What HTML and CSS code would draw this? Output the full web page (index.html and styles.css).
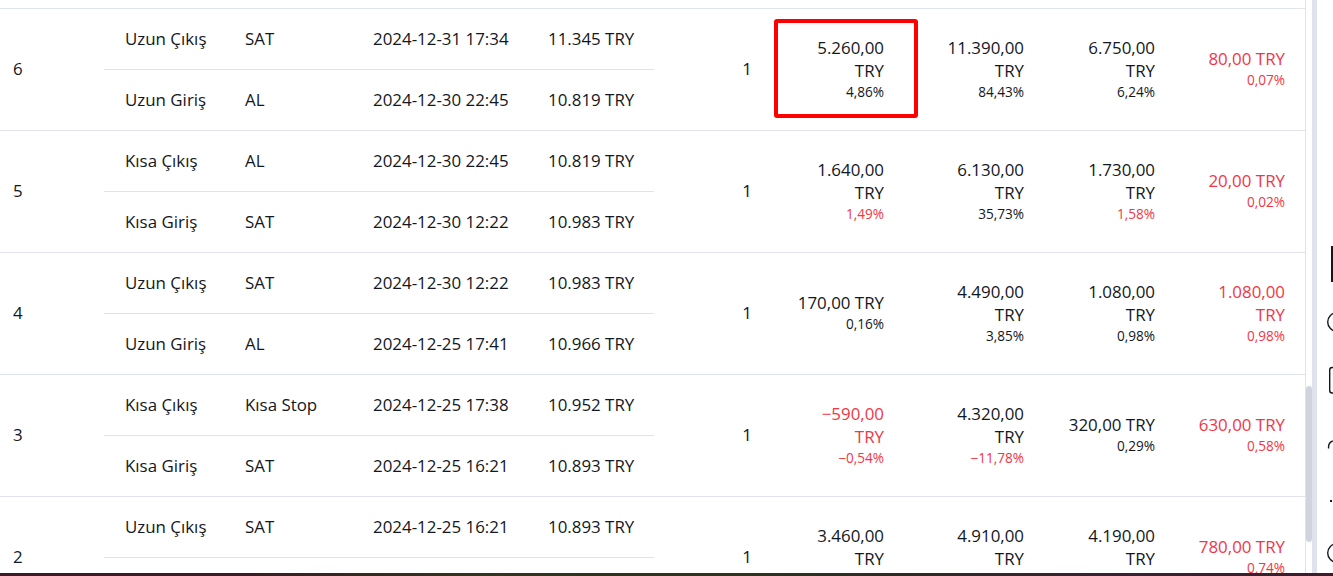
FILE: index.html
```html
<!DOCTYPE html>
<html lang="tr">
<head>
<meta charset="utf-8">
<title>İşlem Listesi</title>
<link rel="stylesheet" href="styles.css">
</head>
<body>
<div class="screen">
  <div class="workspace">
    <div class="trades">
      <div class="row-tail"></div>

      <div class="trade">
        <div class="num">6</div>
        <div class="legs">
          <div class="leg"><span>Uzun Çıkış</span><span>SAT</span><span>2024-12-31 17:34</span><span>11.345 TRY</span></div>
          <div class="leg"><span>Uzun Giriş</span><span>AL</span><span>2024-12-30 22:45</span><span>10.819 TRY</span></div>
        </div>
        <div class="val"><div class="main">1</div></div>
        <div class="val marked">
          <div class="main">5.260,00</div><div class="main">TRY</div><div class="sub">4,86%</div>
          <div class="mark"></div>
        </div>
        <div class="val"><div class="main">11.390,00</div><div class="main">TRY</div><div class="sub">84,43%</div></div>
        <div class="val"><div class="main">6.750,00</div><div class="main">TRY</div><div class="sub">6,24%</div></div>
        <div class="val neg"><div class="main">80,00 TRY</div><div class="sub">0,07%</div></div>
      </div>

      <div class="trade">
        <div class="num">5</div>
        <div class="legs">
          <div class="leg"><span>Kısa Çıkış</span><span>AL</span><span>2024-12-30 22:45</span><span>10.819 TRY</span></div>
          <div class="leg"><span>Kısa Giriş</span><span>SAT</span><span>2024-12-30 12:22</span><span>10.983 TRY</span></div>
        </div>
        <div class="val"><div class="main">1</div></div>
        <div class="val"><div class="main">1.640,00</div><div class="main">TRY</div><div class="sub red">1,49%</div></div>
        <div class="val"><div class="main">6.130,00</div><div class="main">TRY</div><div class="sub">35,73%</div></div>
        <div class="val"><div class="main">1.730,00</div><div class="main">TRY</div><div class="sub red">1,58%</div></div>
        <div class="val neg"><div class="main">20,00 TRY</div><div class="sub">0,02%</div></div>
      </div>

      <div class="trade">
        <div class="num">4</div>
        <div class="legs">
          <div class="leg"><span>Uzun Çıkış</span><span>SAT</span><span>2024-12-30 12:22</span><span>10.983 TRY</span></div>
          <div class="leg"><span>Uzun Giriş</span><span>AL</span><span>2024-12-25 17:41</span><span>10.966 TRY</span></div>
        </div>
        <div class="val"><div class="main">1</div></div>
        <div class="val"><div class="main">170,00 TRY</div><div class="sub">0,16%</div></div>
        <div class="val"><div class="main">4.490,00</div><div class="main">TRY</div><div class="sub">3,85%</div></div>
        <div class="val"><div class="main">1.080,00</div><div class="main">TRY</div><div class="sub">0,98%</div></div>
        <div class="val neg"><div class="main">1.080,00</div><div class="main">TRY</div><div class="sub">0,98%</div></div>
      </div>

      <div class="trade">
        <div class="num">3</div>
        <div class="legs">
          <div class="leg"><span>Kısa Çıkış</span><span>Kısa Stop</span><span>2024-12-25 17:38</span><span>10.952 TRY</span></div>
          <div class="leg"><span>Kısa Giriş</span><span>SAT</span><span>2024-12-25 16:21</span><span>10.893 TRY</span></div>
        </div>
        <div class="val"><div class="main">1</div></div>
        <div class="val neg"><div class="main">−590,00</div><div class="main">TRY</div><div class="sub">−0,54%</div></div>
        <div class="val"><div class="main">4.320,00</div><div class="main">TRY</div><div class="sub red">−11,78%</div></div>
        <div class="val"><div class="main">320,00 TRY</div><div class="sub">0,29%</div></div>
        <div class="val neg"><div class="main">630,00 TRY</div><div class="sub">0,58%</div></div>
      </div>

      <div class="trade">
        <div class="num">2</div>
        <div class="legs">
          <div class="leg"><span>Uzun Çıkış</span><span>SAT</span><span>2024-12-25 16:21</span><span>10.893 TRY</span></div>
          <div class="leg"></div>
        </div>
        <div class="val"><div class="main">1</div></div>
        <div class="val"><div class="main">3.460,00</div><div class="main">TRY</div><div class="sub">&nbsp;</div></div>
        <div class="val"><div class="main">4.910,00</div><div class="main">TRY</div><div class="sub">&nbsp;</div></div>
        <div class="val"><div class="main">4.190,00</div><div class="main">TRY</div><div class="sub">&nbsp;</div></div>
        <div class="val neg"><div class="main">780,00 TRY</div><div class="sub">0,74%</div></div>
      </div>
    </div>

    <div class="scroll"><div class="thumb"></div></div>
    <div class="divider"></div>
    <div class="toolbar">
      <svg class="tool-icons" width="16" height="573" viewBox="0 0 16 573" aria-hidden="true">
        <rect x="14" y="246" width="2" height="36" fill="#131722"/>
        <circle cx="20" cy="322" r="9.3" fill="none" stroke="#131722" stroke-width="1.4"/>
        <rect x="12.7" y="367.5" width="12" height="25.5" rx="2.5" fill="none" stroke="#131722" stroke-width="1.4"/>
        <path d="M15.8 441 Q11 442.5 11.6 448.5" fill="none" stroke="#131722" stroke-width="1.4"/>
        <rect x="13" y="500" width="2" height="2" fill="#131722"/>
        <circle cx="20" cy="553" r="9.3" fill="none" stroke="#131722" stroke-width="1.4"/>
      </svg>
    </div>
  </div>
  <div class="taskbar"></div>
</div>
</body>
</html>
```
FILE: styles.css
```css
* { box-sizing: border-box; }

html, body {
  margin: 0;
  padding: 0;
  background: #ffffff;
  overflow: hidden;
}

.screen {
  width: 1333px;
  height: 576px;
  display: flex;
  flex-direction: column;
  font-family: "Open Sans", "Noto Sans", sans-serif;
  color: #131722;
}

.workspace {
  flex: 1;
  display: flex;
  min-height: 0;
  overflow: hidden;
}

.trades {
  width: 1306px;
  flex: none;
  border-right: 1px solid #e0e3eb;
  overflow: hidden;
}

.row-tail {
  height: 9px;
  border-bottom: 1px solid #e0e3eb;
}

.trade {
  display: grid;
  grid-template-columns: 104px 550px 118px 132px 140px 131px 130px;
  border-bottom: 1px solid #e0e3eb;
  font-size: 16.9px;
}

.num {
  align-self: center;
  padding-left: 13px;
  padding-bottom: 2px;
  line-height: 23px;
}

.legs {
  display: flex;
  flex-direction: column;
}

.leg {
  height: 60px;
  display: grid;
  grid-template-columns: 120px 128px 175px 127px;
  align-items: center;
  padding-bottom: 2px;
  line-height: 23px;
}

.leg:first-child {
  height: 61px;
  border-bottom: 1px solid #e0e3eb;
}

.leg span {
  padding-left: 21px;
  white-space: nowrap;
}

.val {
  display: flex;
  flex-direction: column;
  justify-content: center;
  align-items: flex-end;
  padding-right: 20px;
  padding-bottom: 2px;
  text-align: right;
  white-space: nowrap;
}

.val .main {
  line-height: 23px;
}

.val .sub {
  font-size: 13.6px;
  line-height: 20px;
}

.neg,
.red {
  color: #f23645;
}

.marked {
  position: relative;
}

.mark {
  position: absolute;
  left: 2px;
  top: 10px;
  width: 144px;
  height: 99px;
  border: 4px solid #ff0000;
  border-radius: 3px;
}

.scroll {
  width: 6px;
  flex: none;
  padding-top: 386px;
}

.thumb {
  height: 156px;
  background: #d1d4dc;
  border-radius: 3px;
}

.divider {
  width: 5px;
  flex: none;
  background: #e0e3eb;
}

.toolbar {
  width: 16px;
  flex: none;
  background: #ffffff;
  overflow: hidden;
}

.tool-icons {
  display: block;
}

.taskbar {
  height: 3px;
  flex: none;
  background: linear-gradient(90deg, #3d1a26 0%, #3b1c25 18%, #34341f 36%, #30321f 55%, #2e2a26 68%, #3b2230 82%, #3d1c2b 100%);
}
```
